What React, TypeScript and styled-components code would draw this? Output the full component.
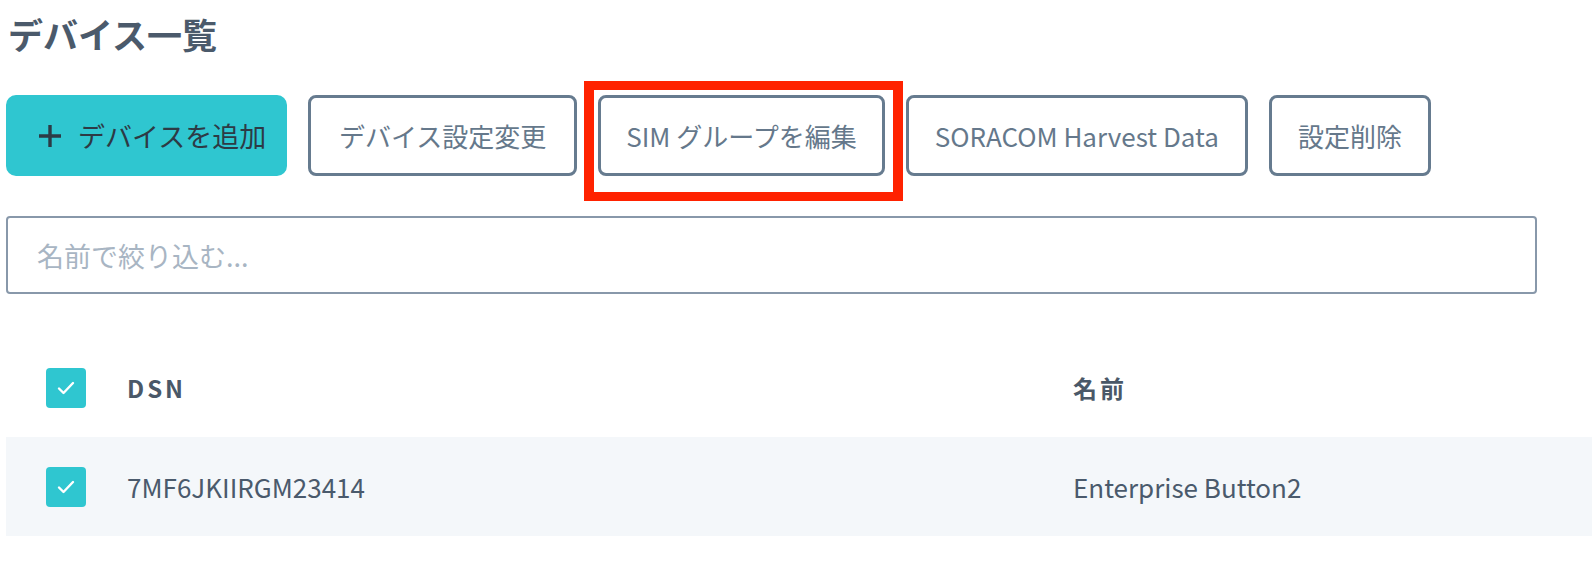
import React from "react";
import styled, { createGlobalStyle } from "styled-components";

const GlobalStyle = createGlobalStyle`
  html, body {
    margin: 0;
    padding: 0;
    background: #fff;
    overflow: hidden;
  }
  body {
    font-family: "Noto Sans CJK JP", "Noto Sans", sans-serif;
    color: #4a5a6c;
  }
`;

const Page = styled.div`
  padding: 0 0 0 6px;
  width: 1586px;
  height: 564px;
  overflow: hidden;
`;

const Title = styled.h1`
  margin: 10px 0 0 2px;
  font-size: 35px;
  line-height: 48px;
  font-weight: 700;
  color: #4b5a6b;
`;

const Toolbar = styled.div`
  display: flex;
  align-items: center;
  gap: 21px;
  margin-top: 37px;
`;

const Button = styled.button<{ $pad?: number }>`
  box-sizing: border-box;
  flex-shrink: 0;
  height: 81px;
  padding: 0 ${({ $pad = 26 }) => $pad}px;
  display: flex;
  align-items: center;
  font-family: inherit;
  font-size: 26px;
  white-space: nowrap;
  border-radius: 8px;
  border: 3px solid #667b8f;
  background: #fff;
  color: #65788b;
  cursor: pointer;
`;

const PrimaryButton = styled(Button)`
  width: 281px;
  padding-left: 28px;
  gap: 15px;
  font-size: 27px;
  border-radius: 10px;
  border-color: #2fc6d0;
  background: #2fc6d0;
  color: #2d3a45;
  svg {
    flex-shrink: 0;
  }
`;

const Highlighted = styled.div`
  position: relative;
`;

const RedFrame = styled.div`
  position: absolute;
  left: -14px;
  top: -14px;
  right: -18px;
  bottom: -25px;
  border-style: solid;
  border-color: #ff2200;
  border-width: 9px 10px;
  pointer-events: none;
`;

const Search = styled.input`
  display: block;
  box-sizing: border-box;
  margin-top: 40px;
  width: 1531px;
  height: 78px;
  padding: 0 29px;
  border: 2px solid #8898aa;
  border-radius: 4px;
  font-family: inherit;
  font-size: 27px;
  color: #4a5a6c;
  outline: none;
  &::placeholder {
    color: #a8b5c3;
  }
`;

const Table = styled.div`
  margin-top: 44px;
  width: 1600px;
`;

const Row = styled.div<{ $band?: boolean }>`
  display: grid;
  grid-template-columns: 121px 946px 1fr;
  align-items: center;
  height: 99px;
  background: ${({ $band }) => ($band ? "#f4f7fa" : "transparent")};
`;

const CheckCell = styled.div`
  padding-left: 40px;
  display: flex;
  align-items: center;
`;

const Check = styled.span`
  width: 40px;
  height: 40px;
  border-radius: 4px;
  background: #2fc6d0;
  display: flex;
  align-items: center;
  justify-content: center;
`;

const HeadCell = styled.div`
  font-size: 24px;
  font-weight: 700;
  letter-spacing: 3px;
  color: #4a5868;
`;

const Cell = styled.div`
  font-size: 26px;
  color: #4a5a6c;
`;

const Checkbox = () => (
  <Check>
    <svg width="22" height="22" viewBox="0 0 22 22" fill="none">
      <polyline
        points="4,11.5 8.5,16 18,6"
        stroke="#fff"
        strokeWidth="2.4"
        strokeLinecap="round"
        strokeLinejoin="round"
      />
    </svg>
  </Check>
);

const PlusIcon = () => (
  <svg width="26" height="26" viewBox="0 0 26 26">
    <path d="M13 2v22M2 13h22" stroke="#2d3a45" strokeWidth="3.4" />
  </svg>
);

export default function App() {
  return (
    <>
      <GlobalStyle />
      <Page>
        <Title>デバイス一覧</Title>
        <Toolbar>
          <PrimaryButton>
            <PlusIcon />
            デバイスを追加
          </PrimaryButton>
          <Button $pad={28}>デバイス設定変更</Button>
          <Highlighted>
            <Button $pad={25}>SIM グループを編集</Button>
            <RedFrame />
          </Highlighted>
          <Button>SORACOM Harvest Data</Button>
          <Button>設定削除</Button>
        </Toolbar>
        <Search placeholder="名前で絞り込む..." />
        <Table>
          <Row>
            <CheckCell>
              <Checkbox />
            </CheckCell>
            <HeadCell>DSN</HeadCell>
            <HeadCell>名前</HeadCell>
          </Row>
          <Row $band>
            <CheckCell>
              <Checkbox />
            </CheckCell>
            <Cell>7MF6JKIIRGM23414</Cell>
            <Cell>Enterprise Button2</Cell>
          </Row>
        </Table>
      </Page>
    </>
  );
}
